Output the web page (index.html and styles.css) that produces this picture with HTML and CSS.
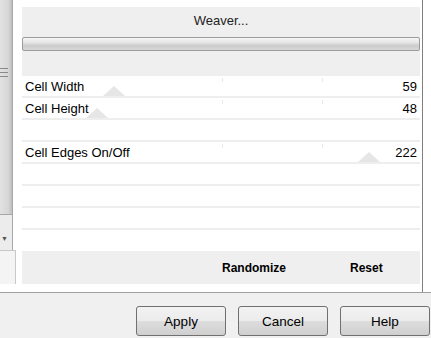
FILE: index.html
```html
<!DOCTYPE html>
<html lang="en">
<head>
    <meta charset="UTF-8">
    <title>Weaver</title>
    <link rel="stylesheet" href="styles.css">
</head>
<body>
    <div class="window">
        <div class="top">
            <div class="side">
                <div class="scroll">
                    <div class="scroll-thumb"><span class="grip"></span></div>
                    <div class="scroll-arrow">&#9660;</div>
                </div>
                <div class="side-box"></div>
            </div>

            <div class="panel">
                <div class="head">
                    <div class="title">Weaver...</div>
                    <div class="bar"></div>
                </div>
                <div class="rows">
                    <div class="row slider">
                        <span>Cell Width</span><span>59</span>
                        <i class="tick half"></i><i class="tick quarter"></i>
                        <i class="mark" style="left: 81px"></i>
                    </div>
                    <div class="row slider">
                        <span>Cell Height</span><span>48</span>
                        <i class="tick half"></i><i class="tick quarter"></i>
                        <i class="mark" style="left: 64px"></i>
                    </div>
                    <div class="row"></div>
                    <div class="row slider">
                        <span>Cell Edges On/Off</span><span>222</span>
                        <i class="tick half"></i><i class="tick quarter"></i>
                        <i class="mark" style="left: 336px"></i>
                    </div>
                    <div class="row"></div>
                    <div class="row"></div>
                    <div class="row"></div>
                    <div class="row last"></div>
                </div>
                <div class="foot">
                    <span>Randomize</span>
                    <span>Reset</span>
                </div>
            </div>

            <div class="edge"></div>
        </div>

        <div class="buttons">
            <button class="btn">Apply</button>
            <button class="btn">Cancel</button>
            <button class="btn">Help</button>
        </div>
    </div>
</body>
</html>
```

FILE: styles.css
```css
body {
    margin: 0;
    background: #fff;
    font-family: "Liberation Sans", Arial, sans-serif;
    color: #000;
}
.window {
    width: 431px;
    height: 338px;
    overflow: hidden;
}
.top {
    display: flex;
    height: 292px;
    border-bottom: 1px solid #a0a0a0;
}

/* left scroll strip */
.side {
    width: 22px;
    flex: none;
}
.scroll {
    width: 12px;
    height: 250px;
    border-right: 1px solid #a8a8a8;
    background: #ececec;
    display: flex;
    flex-direction: column;
}
.scroll-thumb {
    height: 214px;
    border-bottom: 1px solid #a8a8a8;
    background: linear-gradient(to right, #e2e2e2, #d6d6d6 70%, #bdbdbd);
    position: relative;
}
.grip {
    position: absolute;
    left: 0;
    top: 68px;
    width: 8px;
    height: 9px;
    background: repeating-linear-gradient(to bottom, #8a8a8a 0, #8a8a8a 1px, transparent 1px, transparent 4px);
}
.scroll-arrow {
    margin-top: 20px;
    font-size: 7px;
    line-height: 8px;
    color: #555;
    padding-left: 1px;
}
.side-box {
    width: 16px;
    height: 34px;
    border-top: 1px solid #c8c8c8;
    border-right: 1px solid #c8c8c8;
    box-sizing: border-box;
    background: #f4f4f4;
}

/* main panel */
.panel {
    width: 398px;
    margin-top: 7px;
    flex: none;
}
.head {
    height: 69px;
    background: #efefef;
}
.title {
    height: 28px;
    line-height: 28px;
    text-align: center;
    font-size: 13px;
    color: #222;
}
.bar {
    margin-top: 2px;
    height: 14px;
    box-sizing: border-box;
    border: 1px solid #9c9c9c;
    border-radius: 2px;
    background: linear-gradient(to bottom, #f6f6f6, #e4e4e4 40%, #cbcbcb 65%, #d9d9d9);
}
.row {
    position: relative;
    height: 20px;
    border-bottom: 2px solid #eeeeee;
    display: flex;
    justify-content: space-between;
    align-items: center;
    padding: 0 3px;
    font-size: 13px;
}
.row.last {
    height: 21px;
    border-bottom: none;
}
.row span {
    position: relative;
    z-index: 1;
}
.tick {
    position: absolute;
    top: 2px;
    width: 1px;
    height: 4px;
    background: #e8e8e8;
}
.tick.half {
    left: 200px;
}
.tick.quarter {
    left: 300px;
}
.mark {
    position: absolute;
    bottom: 0;
    width: 0;
    height: 0;
    border-left: 11px solid transparent;
    border-right: 11px solid transparent;
    border-bottom: 10px solid #e6e6e6;
}
.foot {
    height: 33px;
    background: #efefef;
    display: flex;
    align-items: center;
    gap: 64px;
    padding-left: 200px;
    font-size: 12px;
    font-weight: bold;
}

.edge {
    width: 5px;
    margin-left: 2px;
    border-left: 1px solid #808080;
}

/* dialog buttons */
.buttons {
    height: 45px;
    background: #f0f0f0;
    display: flex;
    justify-content: flex-end;
    gap: 12px;
    padding: 13px 1px 0 0;
    box-sizing: border-box;
}
.btn {
    width: 90px;
    height: 30px;
    border: 1px solid #707070;
    border-radius: 3px;
    background: linear-gradient(to bottom, #f2f2f2, #ebebeb 50%, #dddddd 51%, #cfcfcf);
    font-family: "Liberation Sans", Arial, sans-serif;
    font-size: 13.5px;
    color: #000;
    padding: 0;
}
```
